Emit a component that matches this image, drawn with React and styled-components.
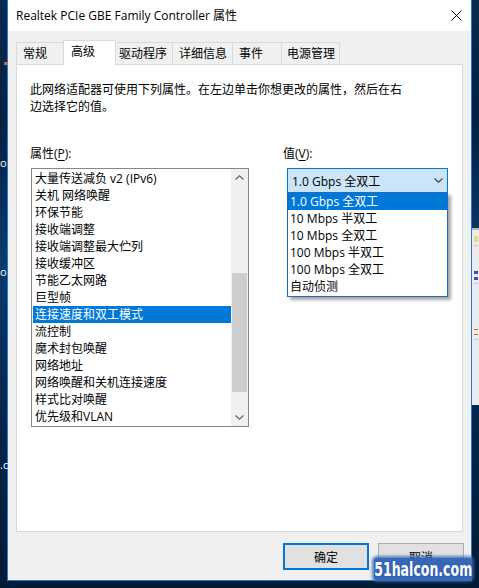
import styled, { createGlobalStyle } from "styled-components"

const GlobalStyle = createGlobalStyle`
  html, body { margin: 0; padding: 0; }
  body {
    background: #06203d;
    font-family: "Open Sans", "Noto Sans CJK SC", sans-serif;
    font-size: 12px;
    color: #000;
  }
  * { box-sizing: border-box; }
`

const Desktop = styled.div`
  position: relative;
  width: 479px;
  height: 588px;
  overflow: hidden;
  padding: 0 7px 7px 7px;
  background: linear-gradient(180deg, #0a2a50 0%, #05203f 20%, #0b3a6e 45%, #06254a 70%, #031a33 100%);
`

const Window = styled.div`
  width: 465px;
  height: 581px;
  display: flex;
  flex-direction: column;
  background: #f0f0f0;
  border: 1px solid #1f7fd6;
  border-top: none;
`

const TitleBar = styled.div`
  height: 31px;
  flex: none;
  display: flex;
  align-items: center;
  justify-content: space-between;
  background: #fff;
  padding: 0 9px 1px 8px;
  font-size: 12px;
`

const Body = styled.div`
  flex: 1;
  display: flex;
  flex-direction: column;
  padding: 9px 8px 10px 8px;
`

const TabRow = styled.div`
  height: 24px;
  display: flex;
  align-items: flex-end;
`

const Tab = styled.div`
  position: relative;
  width: ${p => p.w}px;
  height: ${p => (p.active ? 25 : 22)}px;
  margin-left: ${p => (p.first ? 0 : -1)}px;
  margin-bottom: ${p => (p.active ? -1 : 0)}px;
  padding-left: ${p => p.pad}px;
  line-height: ${p => (p.active ? 22 : 21)}px;
  background: ${p => (p.active ? "#fff" : "#f0f0f0")};
  border: 1px solid #d9d9d9;
  border-bottom: none;
  z-index: ${p => (p.active ? 2 : 1)};
  white-space: nowrap;
`

const Panel = styled.div`
  flex: 1;
  display: flex;
  flex-direction: column;
  background: #fff;
  border: 1px solid #d9d9d9;
  padding: 16px 13px;
`

const Desc = styled.p`
  margin: 0;
  line-height: 17px;
`

const Fields = styled.div`
  display: flex;
  gap: 34px;
  margin-top: 30px;
`

const Column = styled.div`
  display: flex;
  flex-direction: column;
  width: ${p => p.w}px;
  position: relative;
`

const Label = styled.div`
  height: 17px;
  line-height: 17px;
  margin-bottom: 6px;
  u { text-underline-offset: 2px; }
`

const ListBox = styled.div`
  margin-left: 1px;
  width: 218px;
  height: 259px;
  display: flex;
  border: 1px solid #828790;
`

const Items = styled.div`
  flex: 1;
  padding: 1px 0;
`

const Item = styled.div`
  height: 17px;
  line-height: 17px;
  margin-left: 1px;
  padding-left: 2px;
  white-space: nowrap;
  background: ${p => (p.selected ? "#0078d7" : "transparent")};
  color: ${p => (p.selected ? "#fff" : "#000")};
`

const ScrollBar = styled.div`
  width: 17px;
  display: flex;
  flex-direction: column;
  background: #f0f0f0;
`

const ArrowBtn = styled.div`
  height: 17px;
  flex: none;
  display: flex;
  align-items: center;
  justify-content: center;
`

const Thumb = styled.div`
  margin: 87px 1px 0 1px;
  height: 119px;
  background: #cdcdcd;
`

const Combo = styled.div`
  position: relative;
  margin-left: 4px;
  width: 161px;
  height: 25px;
  display: flex;
  align-items: center;
  justify-content: space-between;
  padding: 0 4px 0 4px;
  background: #cce4f7;
  border: 1px solid #0078d7;
`

const Popup = styled.div`
  position: absolute;
  left: -1px;
  top: 23px;
  width: 161px;
  padding-bottom: 1px;
  background: #fff;
  border: 1px solid #1f6cc0;
  box-shadow: 3px 3px 3px rgba(0, 0, 0, 0.35);
  z-index: 5;
`

const Option = styled.div`
  height: 17px;
  line-height: 17px;
  padding-left: 2px;
  white-space: nowrap;
  background: ${p => (p.selected ? "#0078d7" : "transparent")};
  color: ${p => (p.selected ? "#fff" : "#000")};
`

const ButtonRow = styled.div`
  display: flex;
  justify-content: flex-end;
  gap: 9px;
  margin-top: 11px;
  margin-right: -1px;
`

const Button = styled.div`
  width: 86px;
  height: 27px;
  display: flex;
  align-items: center;
  justify-content: center;
  background: #e1e1e1;
  border: ${p => (p.primary ? "2px solid #0078d7" : "1px solid #adadad")};
`

const Watermark = styled.div`
  position: absolute;
  right: 7px;
  bottom: 8px;
  width: 98px;
  height: 22px;
  display: flex;
  align-items: center;
  justify-content: center;
  background: #3768b8;
  border-radius: 3px;
  box-shadow: 0 0 3px 2px rgba(55, 104, 184, 0.8);
  overflow: hidden;
  z-index: 10;
`

const WatermarkText = styled.span`
  display: inline-block;
  font-family: "DejaVu Sans", sans-serif;
  font-weight: bold;
  font-size: 19px;
  color: #fff;
  transform: scaleX(0.66);
  white-space: nowrap;
  text-shadow: 0 0 2px #1d4a9a;
`

const SideStrip = styled.div`
  position: absolute;
  right: 0;
  top: 228px;
  width: 7px;
  height: 177px;
  background: #ececec;
  border-top: 2px solid #b9b9b9;
`

const Speck = styled.div`
  width: ${p => p.w || 4}px;
  height: ${p => p.h || 3}px;
  margin: ${p => p.m}px 0 0 2px;
  background: ${p => p.c};
`

const DeskMark = styled.div`
  position: absolute;
  left: 0;
  top: ${p => p.top}px;
  font-size: 11px;
  line-height: 11px;
  color: ${p => p.c || "#fff"};
`

const Chevron = ({ up, color = "#606060" }) => (
  <svg width="9" height="5" viewBox="0 0 9 5">
    <path d={up ? "M0.5 4.5 L4.5 0.8 L8.5 4.5" : "M0.5 0.5 L4.5 4.2 L8.5 0.5"} fill="none" stroke={color} strokeWidth="1.1" />
  </svg>
)

const CloseIcon = () => (
  <svg width="11" height="11" viewBox="0 0 11 11">
    <path d="M0.5 0.5 L10.5 10.5 M10.5 0.5 L0.5 10.5" stroke="#000" strokeWidth="1" />
  </svg>
)

const tabs = [
  { label: "常规", w: 48, pad: 6 },
  { label: "高级", w: 53, pad: 7, active: true },
  { label: "驱动程序", w: 58, pad: 3 },
  { label: "详细信息", w: 61, pad: 6 },
  { label: "事件", w: 50, pad: 6 },
  { label: "电源管理", w: 59, pad: 5 },
]

const properties = [
  "大量传送减负 v2 (IPv6)",
  "关机 网络唤醒",
  "环保节能",
  "接收端调整",
  "接收端调整最大伫列",
  "接收缓冲区",
  "节能乙太网路",
  "巨型帧",
  "连接速度和双工模式",
  "流控制",
  "魔术封包唤醒",
  "网络地址",
  "网络唤醒和关机连接速度",
  "样式比对唤醒",
  "优先级和VLAN",
]

const values = [
  "1.0 Gbps 全双工",
  "10 Mbps 半双工",
  "10 Mbps 全双工",
  "100 Mbps 半双工",
  "100 Mbps 全双工",
  "自动侦测",
]

const App = () => {
  return (
    <Desktop>
      <GlobalStyle />
      <DeskMark top={58} c="#e06a1a">▪</DeskMark>
      <DeskMark top={157}>o</DeskMark>
      <DeskMark top={266}>o</DeskMark>
      <DeskMark top={459}>.c</DeskMark>
      <SideStrip>
        <Speck c="#e8d890" h={6} m={6} />
        <Speck c="#c8c8c8" h={1} m={3} />
        <Speck c="#3a4fc0" h={3} m={25} />
        <Speck c="#3a4fc0" h={3} m={3} />
        <Speck c="#c8c8c8" h={1} m={3} />
        <Speck c="#c86a20" h={1} m={45} />
        <Speck c="#c86a20" h={1} m={4} />
        <Speck c="#c8c8c8" h={1} m={4} />
      </SideStrip>

      <Window>
        <TitleBar>
          <span>Realtek PCIe GBE Family Controller 属性</span>
          <CloseIcon />
        </TitleBar>

        <Body>
          <TabRow>
            {tabs.map((t, i) => (
              <Tab key={t.label} w={t.w} pad={t.pad} active={t.active} first={i === 0}>
                {t.label}
              </Tab>
            ))}
          </TabRow>

          <Panel>
            <Desc>
              此网络适配器可使用下列属性。在左边单击你想更改的属性，然后在右
              <br />
              边选择它的值。
            </Desc>

            <Fields>
              <Column w={219}>
                <Label>属性(<u>P</u>):</Label>
                <ListBox>
                  <Items>
                    {properties.map(p => (
                      <Item key={p} selected={p === "连接速度和双工模式"}>{p}</Item>
                    ))}
                  </Items>
                  <ScrollBar>
                    <ArrowBtn><Chevron up /></ArrowBtn>
                    <Thumb />
                    <div style={{ flex: 1 }} />
                    <ArrowBtn><Chevron /></ArrowBtn>
                  </ScrollBar>
                </ListBox>
              </Column>

              <Column w={166}>
                <Label>值(<u>V</u>):</Label>
                <Combo>
                  <span>1.0 Gbps 全双工</span>
                  <Chevron color="#404040" />
                  <Popup>
                    {values.map((v, i) => (
                      <Option key={v} selected={i === 0}>{v}</Option>
                    ))}
                  </Popup>
                </Combo>
              </Column>
            </Fields>
          </Panel>

          <ButtonRow>
            <Button primary>确定</Button>
            <Button>取消</Button>
          </ButtonRow>
        </Body>
      </Window>

      <Watermark>
        <WatermarkText>51halcon.com</WatermarkText>
      </Watermark>
    </Desktop>
  )
}

export default App
